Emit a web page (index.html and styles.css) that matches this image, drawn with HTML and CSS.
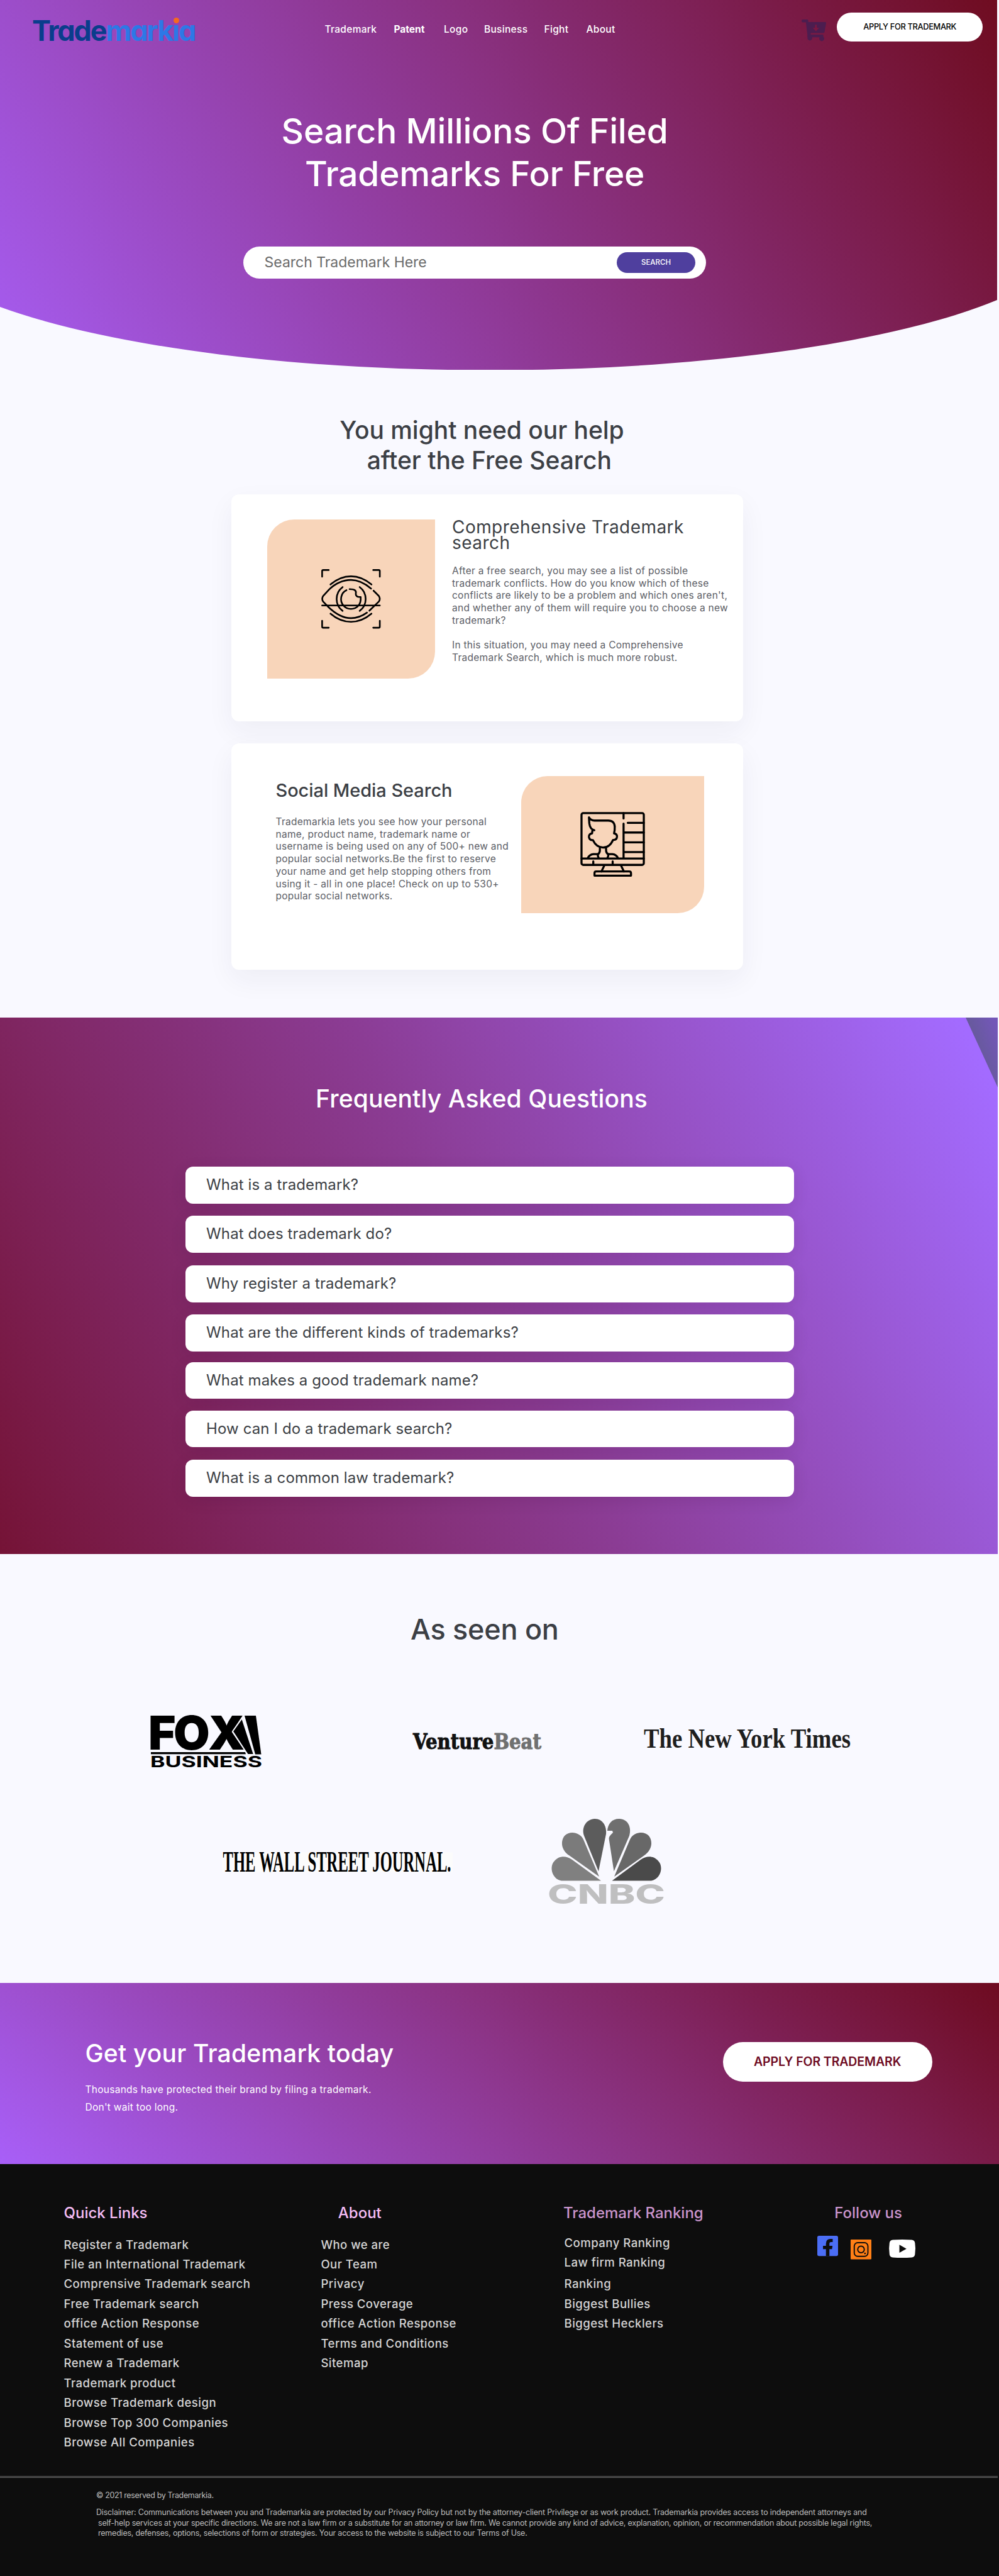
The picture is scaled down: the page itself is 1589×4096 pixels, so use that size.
FILE: index.html
```html
<!DOCTYPE html>
<html lang="en">
<head>
<meta charset="utf-8">
<title>Trademarkia</title>
<link rel="stylesheet" href="styles.css">
</head>
<body>
<section class="hero">
  <header class="header">
    <a class="logo"><span class="logo-dark">Trade</span><span class="logo-light">mark<span class="logo-i">i</span>a</span></a>
    <nav class="nav"><a>Trademark</a><a class="active">Patent</a><a>Logo</a><a>Business</a><a>Fight</a><a>About</a></nav>
    <svg class="cart" viewBox="187 114 142 126" fill="#4c1d4f">
      <path d="M194 114H219Q224 114 225 119L226 129H324Q330 129 329 135L320 186Q319 192 313 192H240V201H308Q313 201 313 206V214A14 14 0 1 1 292 217H248A14 14 0 1 1 222 216Q218 212 221 204L212 130H194Q187 130 187 122T194 114Z"/>
      <path d="M265 144H275V162H289L270 182L251 162H265Z" fill="#7b1741"/>
    </svg>
    <a class="btn-apply">APPLY FOR TRADEMARK</a>
  </header>
  <h1 class="hero-title">Search Millions Of Filed<br>Trademarks For Free</h1>
  <div class="search"><span class="search-text">Search Trademark Here</span><a class="search-btn">SEARCH</a></div>
</section>

<section class="help">
  <h2 class="help-title">You might need our help<br><span class="help-second">after the Free Search</span></h2>
  <article class="card card-a">
    <div class="tile tile-a">
      <svg class="eye" viewBox="27 33 342 342" fill="none" stroke="#000" stroke-width="9.5" stroke-linecap="round" stroke-linejoin="round">
        <path d="M32 76V44Q32 38 38 38H70M326 38H358Q364 38 364 44V76M32 330V364Q32 370 38 370H70M326 370H358Q364 370 364 364V330"/>
        <path d="M80 121Q135 74 198 74T316 121M80 289Q135 336 198 336T316 289"/>
        <path d="M314 145Q255 95 198 95Q130 95 72 150L38 187Q27 204 38 220L66 249Q135 315 198 315Q245 315 290 283M328 157L358 187Q370 204 358 220L304 272"/>
        <path d="M150 136C104 170 104 240 150 273M248 136C294 170 294 240 248 273"/>
        <path d="M172 154C140 168 130 215 155 243C175 268 220 268 241 243Q256 225 254 193Q224 196 226 172Q232 148 190 148"/>
        <path d="M32 242H364"/>
      </svg>
    </div>
    <div class="card-a-text">
      <h3 class="card-a-title">Comprehensive Trademark<br>search</h3>
      <p class="copy">After a free search, you may see a list of possible<br>trademark conflicts. How do you know which of these<br>conflicts are likely to be a problem and which ones aren't,<br>and whether any of them will require you to choose a new<br>trademark?</p>
      <p class="copy copy-next">In this situation, you may need a Comprehensive<br>Trademark Search, which is much more robust.</p>
    </div>
  </article>
  <article class="card card-b">
    <div class="card-b-text">
      <h3 class="card-b-title">Social Media Search</h3>
      <p class="copy">Trademarkia lets you see how your personal<br>name, product name, trademark name or<br>username is being used on any of 500+ new and<br>popular social networks.Be the first to reserve<br>your name and get help stopping others from<br>using it - all in one place! Check on up to 530+<br>popular social networks.</p>
    </div>
    <div class="tile tile-b">
      <svg class="monitor" viewBox="38 24 374 376" fill="none" stroke="#000" stroke-width="12" stroke-linecap="round" stroke-linejoin="round">
        <rect x="45" y="31" width="360" height="299" rx="10"/>
        <path d="M45 293H405M288 31V62M288 92V293M312 87H405M288 143H405M288 200H405M288 256H405M113 310V325M225 310V325"/>
        <path d="M176 335L160 368M274 335L290 368M120 392V378Q120 368 130 368H320Q331 368 331 378V392Z"/>
        <path d="M119 130Q94 124 90 90L88 55Q98 74 120 74H195Q236 72 237 110Q238 130 233 148Q251 150 250 168Q248 187 227 186Q208 230 169 230Q130 228 111 187Q91 188 88 169Q87 151 106 148L108 130"/>
        <path d="M151 234V248Q150 263 139 269Q139 282 144 290M187 234V248Q188 263 200 269Q200 282 195 290M82 290Q92 269 114 268H139M255 290Q245 269 223 268H200"/>
      </svg>
    </div>
  </article>
</section>

<section class="faq">
  <svg class="faq-corner" viewBox="0 0 51 111"><defs><linearGradient id="fc" x1="0" y1="1" x2="1" y2="0.2"><stop offset="0" stop-color="#5b5c80"/><stop offset="1" stop-color="#7357b8"/></linearGradient></defs><path d="M0 0H51V111Z" fill="url(#fc)"/></svg>
  <h2 class="faq-title">Frequently Asked Questions</h2>
  <div class="faq-list">
    <div class="faq-item">What is a trademark?</div>
    <div class="faq-item">What does trademark do?</div>
    <div class="faq-item">Why register a trademark?</div>
    <div class="faq-item">What are the different kinds of trademarks?</div>
    <div class="faq-item tight">What makes a good trademark name?</div>
    <div class="faq-item mid">How can I do a trademark search?</div>
    <div class="faq-item">What is a common law trademark?</div>
  </div>
</section>

<section class="seen">
  <h2 class="seen-title">As seen on</h2>
  <div class="press press-one">
    <svg class="fox" viewBox="0 0 177 83">
      <text x="-4 36 91" y="54" font-family="Inter" font-weight="900" font-size="74.5">FOX</text>
      <path d="M145 4L130 25L154 62H164Z" stroke="#f9f9ff" stroke-width="2"/>
      <path d="M149 0H167L175.500 61.500H166Z"/>
      <path d="M0 58H150L151 61.300H0Z"/>
      <text x="-1" y="82.400" font-family="Inter" font-weight="700" font-size="24.800" textLength="178" lengthAdjust="spacingAndGlyphs">BUSINESS</text>
    </svg>
    <svg class="vb" viewBox="0 0 204 40"><text x="0" y="32" font-family="'DejaVu Serif'" font-weight="700" font-size="33" textLength="204" lengthAdjust="spacingAndGlyphs" fill="#111" stroke="#111" stroke-width="1">Venture<tspan fill="#707070" stroke="#707070">Beat</tspan></text></svg>
    <svg class="nyt" viewBox="0 0 329 56"><text x="0" y="39" font-family="'Liberation Serif'" font-weight="700" font-size="45" textLength="329" lengthAdjust="spacingAndGlyphs" fill="#1e1e1e">The New York Times</text></svg>
  </div>
  <div class="press press-two">
    <svg class="wsj" viewBox="0 0 367 33"><rect width="367" height="32" fill="#fcfcfc"/><text x="1.500" y="31" font-family="'Liberation Serif'" font-weight="700" font-size="46" textLength="363" lengthAdjust="spacingAndGlyphs">THE WALL STREET JOURNAL.</text></svg>
    <svg class="cnbc" viewBox="0 0 183 137">
      <path d="M83 98.400H20C5 96 0 76 9 67C17 58 28 59 37 65Z" fill="#808080"/>
      <path d="M80 92L32 58C20 50 18 36 25 27C34 18 50 22 55 33Z" fill="#7b7b7b"/>
      <path d="M79 83.500L56 27C51 14 60 0 73 0S92 12 91 24Z" fill="#5c5c5c"/>
      <path d="M103.500 83.500L95.600 32Q95 28 102 22L101 19H93C94 8 100 0 112 0C126 0 132 14 128 27Z" fill="#6f6f6f"/>
      <path d="M104 92L152 58C164 50 166 36 159 27C150 18 134 22 129 33Z" fill="#686868"/>
      <path d="M100.500 98.400H163C178 96 183 76 174 67C166 58 155 59 146 65Z" fill="#4a4a4a"/>
      <text x="-2" y="134.500" font-family="Inter" font-weight="800" font-size="42" textLength="187" lengthAdjust="spacingAndGlyphs" fill="#bfbfc0">CNBC</text>
    </svg>
  </div>
</section>

<section class="cta">
  <div class="cta-text">
    <h2 class="cta-title">Get your Trademark today</h2>
    <p class="cta-copy">Thousands have protected their brand by filing a trademark.<br>Don't wait too long.</p>
  </div>
  <a class="cta-btn">APPLY FOR TRADEMARK</a>
</section>

<footer class="footer">
  <div class="columns">
    <div class="col">
      <h4>Quick Links</h4>
      <ul><li>Register a Trademark</li><li>File an International Trademark</li><li>Comprensive Trademark search</li><li>Free Trademark search</li><li>office Action Response</li><li>Statement of use</li><li>Renew a Trademark</li><li>Trademark product</li><li>Browse Trademark design</li><li>Browse Top 300 Companies</li><li>Browse All Companies</li></ul>
    </div>
    <div class="col about">
      <h4>About</h4>
      <ul><li>Who we are</li><li>Our Team</li><li>Privacy</li><li>Press Coverage</li><li>office Action Response</li><li>Terms and Conditions</li><li>Sitemap</li></ul>
    </div>
    <div class="col ranking">
      <h4>Trademark Ranking</h4>
      <ul><li>Company Ranking</li><li>Law firm Ranking</li><li>Ranking</li><li>Biggest Bullies</li><li>Biggest Hecklers</li></ul>
    </div>
    <div class="col follow">
      <h4>Follow us</h4>
      <div class="social">
        <svg class="fb" viewBox="0 0 120 117"><rect width="120" height="117" rx="10" fill="#4b6ef5"/><path d="M50 117V77H33V58H50V46Q50 18 76 18H89V36H79Q70 36 70 46V58H88L85 77H70V117Z" fill="#0d0d0d"/></svg>
        <svg class="ig" viewBox="0 0 120 114"><rect width="120" height="114" rx="3" fill="#ff7f16"/><g fill="none" stroke="#0d0d0d" stroke-width="7"><rect x="21" y="18" width="79" height="79" rx="20"/><circle cx="60" cy="57" r="19"/></g><circle cx="83" cy="80" r="5" fill="#0d0d0d"/></svg>
        <svg class="yt" viewBox="0 0 153 105"><path d="M22 2Q76 -2 131 2Q148 3 150 20Q155 52 150 85Q148 101 131 103Q76 107 22 103Q5 101 3 85Q-2 52 3 20Q5 3 22 2Z" fill="#fff"/><path d="M60 30L101 53L60 76Z" fill="#0d0d0d"/></svg>
      </div>
    </div>
  </div>
  <div class="legal">
    <p>© 2021 reserved by Trademarkia.</p>
    <p class="disclaimer">Disclaimer: Communications between you and Trademarkia are protected by our Privacy Policy but not by the attorney-client Privilege or as work product. Trademarkia provides access to independent attorneys and<br><span class="indent">self-help services at your specific directions. We are not a law firm or a substitute for an attorney or law firm. We cannot provide any kind of advice, explanation, opinion, or recommendation about possible legal rights,</span><br><span class="indent">remedies, defenses, options, selections of form or strategies. Your access to the website is subject to our Terms of Use.</span></p>
  </div>
</footer>
</body>
</html>
```
FILE: styles.css
```css
* { box-sizing: border-box; margin: 0; padding: 0; }
body {
  width: 1589px;
  height: 4096px;
  overflow: hidden;
  background: #f9f9ff;
  font-family: Inter, "Liberation Sans", sans-serif;
  color: #3c3f45;
}
h1, h2, h3, h4 { font-weight: 500; white-space: nowrap; }
p, li, a { white-space: nowrap; }
ul { list-style: none; }
svg { display: block; flex: none; overflow: visible; }

/* Hero */
.hero {
  height: 588px;
  background: linear-gradient(59deg, #a65cf0 0%, #8b3386 52%, #6f0c20 100%);
  clip-path: path("M0 0H1586V477A933 224 0 0 1 0 488Z");
}
.header { display: flex; align-items: flex-start; height: 174px; padding: 0 25.6px 0 51px; }
.logo {
  width: 465.500px;
  margin-top: 21.600px;
  font-size: 45px;
  font-weight: 700;
  line-height: 54px;
  letter-spacing: -2.200px;
  font-feature-settings: "cv11";
}
.logo-dark { color: #0a3d8c; }
.logo-light { color: #2d78e6; }
.logo-i {
  position: relative;
  color: transparent;
  background: linear-gradient(transparent 18px, #2d78e6 18px);
  -webkit-background-clip: text;
  background-clip: text;
}
.logo-i::before {
  content: "";
  position: absolute;
  left: 1.500px;
  top: 7px;
  width: 9px;
  height: 9px;
  border-radius: 50%;
  background: #f5691f;
}
.nav {
  display: grid;
  grid-template-columns: 110px 79.500px 64px 95.500px 67px 50px;
  margin-top: 37px;
  color: #fff;
  font-size: 15.500px;
  font-weight: 500;
  line-height: 20px;
  letter-spacing: .3px;
}
.nav .active { font-weight: 700; letter-spacing: 0; }
.cart { width: 39px; height: 34.600px; margin: 31.400px 17.500px 0 auto; }
.btn-apply {
  width: 232.400px;
  height: 46.200px;
  margin-top: 19.800px;
  border-radius: 24px;
  background: #fff;
  color: #000;
  text-align: center;
  font-size: 12.800px;
  font-weight: 500;
  line-height: 45.500px;
  letter-spacing: -.33px;
}
.hero-title {
  width: 1510px;
  color: #fff;
  text-align: center;
  font-size: 55px;
  line-height: 68px;
  letter-spacing: -.2px;
}
.search {
  display: flex;
  align-items: center;
  justify-content: space-between;
  width: 736.400px;
  height: 51.500px;
  margin: 81.700px 0 0 386.600px;
  padding: 0 17px 0 34px;
  border-radius: 26px;
  background: #fff;
}
.search-text { color: #6b6b6b; font-size: 23px; letter-spacing: -.03px; }
.search-btn {
  width: 125px;
  height: 33px;
  border-radius: 17px;
  background: #4f3f9e;
  color: #fff;
  text-align: center;
  font-size: 11.500px;
  font-weight: 500;
  line-height: 33px;
}

/* Help */
.help { height: 1029.700px; padding: 71.600px 0 0 367.800px; }
.help-title {
  width: 797.400px;
  height: 126.300px;
  text-align: center;
  font-size: 39px;
  line-height: 48.800px;
  letter-spacing: -.05px;
}
.help-second { padding-left: 23.600px; }
.card {
  display: flex;
  align-items: flex-start;
  width: 813.800px;
  border-radius: 12px;
  background: #fff;
  box-shadow: 0 16px 44px rgba(40, 40, 80, .055);
}
.card-a { height: 361.100px; padding: 40px 0 0 57.600px; gap: 27.300px; }
.card-b { height: 360.800px; margin-top: 34.600px; padding: 52px 0 0 70.700px; }
.tile { display: flex; align-items: center; justify-content: center; background: #f8d5ba; }
.tile-a { width: 266.300px; height: 253px; border-radius: 43px 0; }
.tile-b { width: 291px; height: 218.200px; border-radius: 42px 0; }
.eye { width: 94.500px; height: 94.500px; }
.monitor { width: 103px; height: 103.500px; }
.card-a-title { font-size: 28px; font-weight: 400; line-height: 25px; letter-spacing: .45px; margin-bottom: 22px; }
.card-b-text { width: 390.700px; padding-top: 5.400px; }
.card-b-title { font-size: 29px; line-height: 36px; letter-spacing: -.06px; margin-bottom: 21.900px; }
.copy { color: #5c5e66; font-size: 15.500px; line-height: 19.770px; letter-spacing: .28px; }
.copy-next { margin-top: 19.770px; }

/* FAQ */
.faq {
  position: relative;
  width: 1586.500px;
  height: 853.700px;
  padding-top: 105.600px;
  background: linear-gradient(63deg, #751336 0%, #8b3c94 49%, #a36bff 97%);
}
.faq-corner { position: absolute; top: 0; right: 0; width: 51px; height: 111px; }
.faq-title {
  width: 1532px;
  color: #fff;
  text-align: center;
  font-size: 39px;
  line-height: 48px;
  letter-spacing: .12px;
}
.faq-list { display: flex; flex-direction: column; gap: 19.700px; width: 968px; margin: 83.700px 0 0 295.300px; }
.faq-item {
  height: 58.800px;
  padding-left: 32.800px;
  border-radius: 12px;
  background: #fff;
  box-shadow: 0 6px 24px rgba(60, 10, 50, .12);
  font-size: 24px;
  line-height: 58px;
  letter-spacing: .11px;
}
.faq-item.tight { margin-top: -3.400px; }
.faq-item.mid { margin-top: -1.500px; }

/* Press */
.seen { height: 681.800px; padding-top: 92px; }
.seen-title { width: 1541.600px; text-align: center; font-size: 45px; line-height: 56px; letter-spacing: -.27px; }
.press { display: flex; }
.press-one { height: 82.400px; margin-top: 108.400px; padding-left: 240.400px; }
.press-two { margin-top: 81.800px; padding-left: 353px; }
.fox { width: 177px; height: 83px; }
.vb { width: 204px; height: 40px; margin: 21.500px 0 0 239.600px; }
.nyt { width: 329px; height: 56px; margin: 12.200px 0 0 163.500px; }
.wsj { width: 367px; height: 33px; margin-top: 52.700px; }
.cnbc { width: 183px; height: 137px; margin-left: 152.800px; }

/* Call to action */
.cta {
  display: flex;
  justify-content: space-between;
  align-items: flex-start;
  height: 287.500px;
  padding: 87.600px 106.500px 0 135.500px;
  background: linear-gradient(40deg, #a85ff8 0%, #8b3384 54%, #6e0b20 100%);
  color: #fff;
}
.cta-title { font-size: 39px; line-height: 48px; letter-spacing: .18px; margin-bottom: 19.900px; }
.cta-copy { font-size: 15.500px; line-height: 28.100px; letter-spacing: .27px; }
.cta-btn {
  width: 332.800px;
  height: 63.600px;
  margin-top: 5.800px;
  border-radius: 32px;
  background: #fff;
  color: #6e0b22;
  text-align: center;
  font-size: 19.500px;
  font-weight: 600;
  line-height: 62.500px;
  letter-spacing: -.1px;
}

/* Footer */
.footer { height: 655.300px; background: #0d0d0d; }
.columns {
  display: grid;
  grid-template-columns: 408.900px 385.600px 403.300px 200px;
  height: 496.600px;
  padding: 63.600px 0 0 101.500px;
}
h4 { color: #f5bdf5; font-size: 24px; line-height: 30px; margin-bottom: 19.300px; }
li { color: #d4d4d4; font-size: 18.600px; font-weight: 500; line-height: 31.450px; letter-spacing: .45px; }
.about h4 { padding-left: 27.400px; }
.ranking h4 { margin-bottom: 16.300px; color: #c994cb; }
.ranking ul { padding-left: 1.500px; }
.ranking li:nth-child(3) { margin-top: 3px; }
.follow h4 { padding-left: 28px; color: #c994cb; }
.social { display: flex; align-items: flex-start; padding-top: 1.100px; }
.fb { width: 33px; height: 32.300px; margin-left: 1px; }
.ig { width: 33px; height: 31.500px; margin: 6.600px 0 0 20.200px; }
.yt { width: 42.200px; height: 29px; margin: 6.600px 0 0 27.300px; }
.legal {
  width: 1587px;
  padding: 19.600px 0 0 153px;
  border-top: 3px double #6a6a6a;
  color: #bdbdbd;
  font-size: 12.500px;
  line-height: 16.500px;
  letter-spacing: -.18px;
}
.legal p:first-child { letter-spacing: -.36px; }
.disclaimer { margin-top: 10.800px; }
.indent { padding-left: 3px; letter-spacing: -.215px; }
```
